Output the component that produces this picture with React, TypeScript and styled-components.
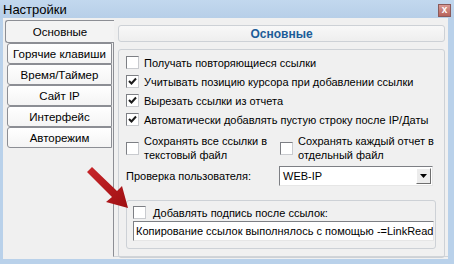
import React from 'react';
import styled, { createGlobalStyle } from 'styled-components';

const GlobalStyle = createGlobalStyle`
  html, body {
    margin: 0;
    padding: 0;
    background: #f0f0f0;
  }
  body {
    font-family: "Liberation Sans", Arial, sans-serif;
    font-size: 11px;
    color: #000;
  }
`;

const Window = styled.div`
  position: relative;
  width: 454px;
  height: 264px;
  box-sizing: border-box;
  background: #b9d1ea;
  padding: 0 6px 5px 3px;
  display: flex;
  flex-direction: column;
  overflow: hidden;
`;

const TitleBar = styled.div`
  flex: none;
  height: 18px;
  margin-left: -3px;
  margin-right: -6px;
  padding: 0 3px;
  display: flex;
  align-items: center;
  justify-content: space-between;
  background: linear-gradient(#c2d8ee, #b7cfe8);
  font-size: 13px;
`;

const CloseButton = styled.div`
  width: 13px;
  height: 13px;
  margin-top: 3px;
  box-sizing: border-box;
  border: 1px solid #8a5a5a;
  background: linear-gradient(#d99a94, #b7625a);
  color: #fff;
  font-size: 10px;
  font-weight: bold;
  line-height: 10px;
  text-align: center;
`;

const Body = styled.div`
  flex: 1;
  min-height: 0;
  background: #f0f0f0;
  display: flex;
  padding: 2px 0 0 2px;
`;

const TabList = styled.div`
  flex: none;
  width: 108px;
  display: flex;
  flex-direction: column;
  position: relative;
  z-index: 1;
`;

const Tab = styled.div<{ $active?: boolean }>`
  flex: none;
  box-sizing: border-box;
  height: ${(p) => (p.$active ? '23px' : '21px')};
  margin-left: ${(p) => (p.$active ? '0' : '2px')};
  margin-right: ${(p) => (p.$active ? '-1px' : '1px')};
  border: 1px solid #8c8e94;
  border-right: ${(p) => (p.$active ? 'none' : '1px solid #8c8e94')};
  border-radius: 3px 0 0 3px;
  background: ${(p) =>
    p.$active ? '#f3f3f3' : 'linear-gradient(#ffffff, #f4f4f4)'};
  display: flex;
  align-items: center;
  justify-content: center;
  white-space: nowrap;
  font-size: 11.5px;
`;

const Panel = styled.div`
  flex: 1;
  min-width: 0;
  border-left: 1px solid #8c8e94;
  border-bottom: 1px solid #d0d4d8;
  margin-bottom: 2px;
  padding: 5px 3px 0 4px;
  display: flex;
  flex-direction: column;
  gap: 7px;
`;

const Header = styled.div`
  flex: none;
  height: 17px;
  box-sizing: border-box;
  border: 1px solid #cdd1d6;
  border-radius: 3px;
  background: linear-gradient(#f8f8f8, #eeeeee);
  display: flex;
  align-items: center;
  justify-content: center;
  font-weight: bold;
  color: #1c5c98;
  font-size: 12px;
`;

const Group = styled.div`
  flex: 1;
  box-sizing: border-box;
  border: 1px solid #cdd1d6;
  border-radius: 3px;
  padding: 3px 8px 8px 7px;
  display: flex;
  flex-direction: column;
`;

const Row = styled.label`
  flex: none;
  height: 19px;
  display: flex;
  align-items: center;
  gap: 5px;
  white-space: nowrap;
`;

const Box = styled.span`
  flex: none;
  width: 13px;
  height: 13px;
  box-sizing: border-box;
  border: 1px solid #7d7f84;
  border-right-color: #c9cbcf;
  border-bottom-color: #c9cbcf;
  background: #fff;
  display: flex;
  align-items: center;
  justify-content: center;
`;

const Pair = styled.div`
  flex: none;
  margin-top: 5px;
  display: flex;
`;

const WrapItem = styled.label<{ $width: string }>`
  flex: none;
  width: ${(p) => p.$width};
  display: flex;
  align-items: flex-start;
  gap: 5px;
  line-height: 14px;
  white-space: nowrap;
  & > span:first-child {
    margin-top: 8px;
  }
`;

const UserRow = styled.div`
  flex: none;
  margin-top: 4px;
  height: 20px;
  display: flex;
  align-items: center;
`;

const UserLabel = styled.span`
  flex: none;
  width: 153px;
`;

const Combo = styled.div`
  flex: none;
  width: 154px;
  height: 20px;
  box-sizing: border-box;
  border: 1px solid #7d7f84;
  border-right-color: #e6e6e6;
  border-bottom-color: #e6e6e6;
  background: #fff;
  display: flex;
  align-items: center;
  padding-left: 3px;
  justify-content: space-between;
`;

const ComboButton = styled.span`
  width: 15px;
  height: 16px;
  box-sizing: border-box;
  margin-right: 1px;
  border: 1px solid #fff;
  border-right-color: #6f6f6f;
  border-bottom-color: #6f6f6f;
  background: #ececec;
  display: flex;
  align-items: center;
  justify-content: center;
`;

const SignGroup = styled.div`
  flex: none;
  margin-top: 14px;
  box-sizing: border-box;
  height: 49px;
  border: 1px solid #cdd1d6;
  border-radius: 3px;
  padding: 5px 1px 0 6px;
  display: flex;
  flex-direction: column;
`;

const SignRow = styled.label`
  height: 13px;
  display: flex;
  align-items: center;
  gap: 7px;
  white-space: nowrap;
`;

const TextInput = styled.input`
  margin: 2px 0 0;
  height: 20px;
  width: 100%;
  box-sizing: border-box;
  border: 1px solid #7d7f84;
  border-right-color: #e6e6e6;
  border-bottom-color: #e6e6e6;
  background: #fff;
  padding: 0 0 0 2px;
  font: inherit;
  color: #000;
  outline: none;
`;

const Arrow = styled.svg`
  position: absolute;
  left: 84px;
  top: 166px;
  pointer-events: none;
`;

const Check = ({ checked }: { checked?: boolean }) => (
  <Box>
    {checked && (
      <svg width="9" height="9" viewBox="0 0 9 9">
        <path d="M1 4 L3.5 6.5 L8 1.5" stroke="#1a1a1a" strokeWidth="2" fill="none" />
      </svg>
    )}
  </Box>
);

const tabs = ['Основные', 'Горячие клавиши', 'Время/Таймер', 'Сайт IP', 'Интерфейс', 'Авторежим'];

export default function App() {
  return (
    <>
      <GlobalStyle />
      <Window>
        <TitleBar>
          <span>Настройки</span>
          <CloseButton>x</CloseButton>
        </TitleBar>
        <Body>
          <TabList>
            {tabs.map((t, i) => (
              <Tab key={t} $active={i === 0}>
                {t}
              </Tab>
            ))}
          </TabList>
          <Panel>
            <Header>Основные</Header>
            <Group>
              <Row>
                <Check />
                Получать повторяющиеся ссылки
              </Row>
              <Row>
                <Check checked />
                Учитывать позицию курсора при добавлении ссылки
              </Row>
              <Row>
                <Check checked />
                Вырезать ссылки из отчета
              </Row>
              <Row>
                <Check checked />
                Автоматически добавлять пустую строку после IP/Даты
              </Row>
              <Pair>
                <WrapItem $width="154px">
                  <Check />
                  <span>
                    Сохранять все ссылки в<br />текстовый файл
                  </span>
                </WrapItem>
                <WrapItem $width="160px">
                  <Check />
                  <span>
                    Сохранять каждый отчет в<br />отдельный файл
                  </span>
                </WrapItem>
              </Pair>
              <UserRow>
                <UserLabel>Проверка пользователя:</UserLabel>
                <Combo>
                  WEB-IP
                  <ComboButton>
                    <svg width="7" height="4" viewBox="0 0 7 4">
                      <path d="M0 0 H7 L3.5 4 Z" fill="#000" />
                    </svg>
                  </ComboButton>
                </Combo>
              </UserRow>
              <SignGroup>
                <SignRow>
                  <Check />
                  Добавлять подпись после ссылок:
                </SignRow>
                <TextInput
                  readOnly
                  value="Копирование ссылок выполнялось с помощью -=LinkReader=-"
                />
              </SignGroup>
            </Group>
          </Panel>
        </Body>
        <Arrow width="50" height="46" viewBox="0 0 50 46">
          <defs>
            <linearGradient id="ar" x1="0" y1="0" x2="1" y2="1">
              <stop offset="0" stopColor="#c8262a" />
              <stop offset="1" stopColor="#9e0f12" />
            </linearGradient>
          </defs>
          <path d="M3 6 L8 1 L33 25 L38 20 L44 42 L22 36 L28 31 Z" fill="url(#ar)" />
        </Arrow>
      </Window>
    </>
  );
}
